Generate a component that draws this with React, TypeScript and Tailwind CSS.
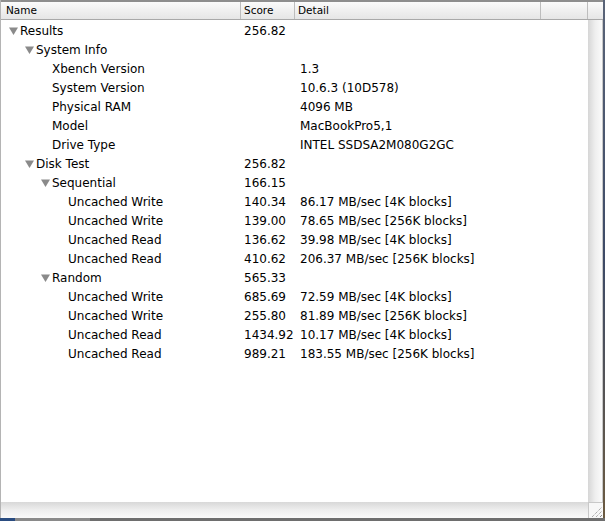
import React from "react";

type Row = { level: number; tri?: boolean; name: string; score?: string; detail?: string };

const rows: Row[] = [
  { level: 0, tri: true, name: "Results", score: "256.82" },
  { level: 1, tri: true, name: "System Info" },
  { level: 2, name: "Xbench Version", detail: "1.3" },
  { level: 2, name: "System Version", detail: "10.6.3 (10D578)" },
  { level: 2, name: "Physical RAM", detail: "4096 MB" },
  { level: 2, name: "Model", detail: "MacBookPro5,1" },
  { level: 2, name: "Drive Type", detail: "INTEL SSDSA2M080G2GC" },
  { level: 1, tri: true, name: "Disk Test", score: "256.82" },
  { level: 2, tri: true, name: "Sequential", score: "166.15" },
  { level: 3, name: "Uncached Write", score: "140.34", detail: "86.17 MB/sec [4K blocks]" },
  { level: 3, name: "Uncached Write", score: "139.00", detail: "78.65 MB/sec [256K blocks]" },
  { level: 3, name: "Uncached Read", score: "136.62", detail: "39.98 MB/sec [4K blocks]" },
  { level: 3, name: "Uncached Read", score: "410.62", detail: "206.37 MB/sec [256K blocks]" },
  { level: 2, tri: true, name: "Random", score: "565.33" },
  { level: 3, name: "Uncached Write", score: "685.69", detail: "72.59 MB/sec [4K blocks]" },
  { level: 3, name: "Uncached Write", score: "255.80", detail: "81.89 MB/sec [256K blocks]" },
  { level: 3, name: "Uncached Read", score: "1434.92", detail: "10.17 MB/sec [4K blocks]" },
  { level: 3, name: "Uncached Read", score: "989.21", detail: "183.55 MB/sec [256K blocks]" },
];

const indents = ["pl-[8px]", "pl-[24px]", "pl-[40px]", "pl-[56px]"];

function Tri() {
  return (
    <svg width="9" height="8" viewBox="0 0 9 8" className="shrink-0 mr-[2px]">
      <polygon points="0,0.5 9,0.5 4.5,8" fill="#8a8a8a" />
    </svg>
  );
}

export default function App() {
  return (
    <div
      className="w-[605px] h-[521px] flex flex-col bg-white text-black overflow-hidden"
      style={{ fontFamily: '"DejaVu Sans", Verdana, sans-serif' }}
    >
      <div className="flex flex-1 min-h-0">
        <div className="flex flex-col flex-1 min-w-0 border-l border-[#b4b4b4]">
          <div className="h-[2px] bg-[#8e8e8e] shrink-0" />
          {/* header */}
          <div className="flex h-[18px] shrink-0 border-b border-[#a9a9a9] bg-gradient-to-b from-[#fbfbfb] via-[#f0f0f0] to-[#e6e6e6] text-[10.5px] leading-[17px]">
            <div className="w-[240px] pl-[5px] border-r border-[#bdbdbd]">Name</div>
            <div className="w-[54px] pl-[3px] border-r border-[#bdbdbd]">Score</div>
            <div className="w-[246px] pl-[3px] border-r border-[#bdbdbd]">Detail</div>
            <div className="w-[47px] border-r border-[#bdbdbd]" />
            <div className="flex-1" />
          </div>
          {/* body */}
          <div className="flex flex-1 min-h-0">
            <div className="flex-1 pt-[1px] text-[12px]">
              {rows.map((r, i) => (
                <div key={i} className="flex h-[19px] items-center whitespace-nowrap">
                  <div className={`w-[240px] flex items-center ${indents[r.level]}`}>
                    {r.tri ? <Tri /> : <span className="w-[11px] shrink-0" />}
                    <span>{r.name}</span>
                  </div>
                  <div className="w-[55px] pl-[3px]">{r.score ?? ""}</div>
                  <div className="pl-[4px]">{r.detail ?? ""}</div>
                </div>
              ))}
            </div>
            <div className="w-[15px] bg-gradient-to-r from-[#d6d6d6] via-[#eeeeee] to-[#fafafa] border-r border-[#c8c8c8]" />
          </div>
          {/* horizontal scrollbar */}
          <div className="flex h-[16px] shrink-0">
            <div className="flex-1 bg-gradient-to-b from-[#d8d8d8] via-[#eeeeee] to-[#fafafa]" />
            <div className="w-[15px] border-l border-t border-[#c8c8c8] bg-[#f7f7f7] flex items-end justify-end">
              <svg width="14" height="14" viewBox="0 0 14 14">
                <line x1="3" y1="13" x2="13" y2="3" stroke="#8c8c8c" strokeWidth="1" strokeDasharray="1 1" />
                <line x1="7" y1="13" x2="13" y2="7" stroke="#8c8c8c" strokeWidth="1" strokeDasharray="1 1" />
                <line x1="11" y1="13" x2="13" y2="11" stroke="#8c8c8c" strokeWidth="1" />
              </svg>
            </div>
          </div>
        </div>
        <div className="w-[2px] bg-gradient-to-b from-[#5a6478] via-[#3d4a66] to-[#6b5a40]" />
      </div>
      <div className="h-[3px] shrink-0 flex">
        <div className="w-[15px] bg-[#2a4c80]" />
        <div className="w-[75px] bg-[#8a8a8a]" />
        <div className="flex-1 bg-[#6e6e6e]" />
      </div>
    </div>
  );
}
